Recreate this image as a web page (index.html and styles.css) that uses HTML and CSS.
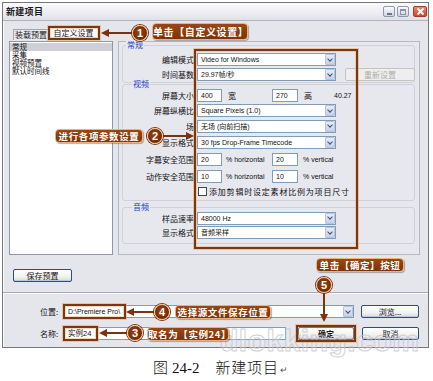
FILE: index.html
```html
<!DOCTYPE html>
<html lang="zh-CN">
<head>
<meta charset="utf-8">
<title>新建项目</title>
<link rel="stylesheet" href="styles.css">
</head>
<body>
<div class="page">
  <div class="dialog">
    <div class="titlebar">
      <span class="title">新建项目</span>
      <div class="winbtns">
        <span class="wb"><i class="ico-min"></i></span>
        <span class="wb"><i class="ico-max"></i></span>
        <span class="wb close"><svg width="9" height="9" viewBox="0 0 9 9"><path d="M1.5 1.5L7.5 7.5M7.5 1.5L1.5 7.5" stroke="#fff" stroke-width="1.8"/></svg></span>
      </div>
    </div>
    <div class="tabs">
      <span class="tab">装载预置</span>
      <span class="tab active">自定义设置</span>
    </div>
    <div class="main">
      <ul class="list">
        <li class="cur">常规</li>
        <li>采集</li>
        <li>视频预置</li>
        <li>默认时间线</li>
      </ul>
      <div class="panel">
        <div class="group g1">
          <div class="glabel">常规</div>
          <div class="row r15 first"><span class="lbl">编辑模式</span><div class="combo"><span>Video for Windows</span><i class="dd"></i></div></div>
          <div class="row r15"><span class="lbl">时间基数</span><div class="combo"><span>29.97帧/秒</span><i class="dd"></i></div><span class="btn off reset">重新设置</span></div>
        </div>
        <div class="group g2">
          <div class="glabel">视频</div>
          <div class="row r15"><span class="lbl">屏幕大小</span><span class="inp">400</span><span class="unit cj">宽</span><span class="inp w26">270</span><span class="unit2 cj">高</span><span class="txt">40.27</span></div>
          <div class="row r15"><span class="lbl">屏幕纵横比</span><div class="combo"><span>Square Pixels (1.0)</span><i class="dd"></i></div></div>
          <div class="row r16"><span class="lbl">场</span><div class="combo"><span>无场 (向前扫描)</span><i class="dd"></i></div></div>
          <div class="row r17"><span class="lbl">显示格式</span><div class="combo"><span>30 fps Drop-Frame Timecode</span><i class="dd"></i></div></div>
          <div class="row r17"><span class="lbl">字幕安全范围</span><span class="inp">20</span><span class="unit">% horizontal</span><span class="inp w26">20</span><span class="unit3">% vertical</span></div>
          <div class="row r16"><span class="lbl">动作安全范围</span><span class="inp">10</span><span class="unit">% horizontal</span><span class="inp w26">10</span><span class="unit3">% vertical</span></div>
          <div class="row r14"><span class="lbl"></span><span class="cb"></span><span class="cbtext">添加剪辑时设定素材比例为项目尺寸</span></div>
        </div>
        <div class="group g3">
          <div class="glabel">音频</div>
          <div class="row r14"><span class="lbl">样品速率</span><div class="combo"><span>48000 Hz</span><i class="dd"></i></div></div>
          <div class="row r15"><span class="lbl">显示格式</span><div class="combo"><span>音频采样</span><i class="dd"></i></div></div>
        </div>
      </div>
    </div>
    <div class="saverow"><span class="btn save">保存预置</span></div>
    <div class="sep"></div>
    <div class="fields">
      <div class="frow"><span class="flbl">位置:</span><div class="combo loc"><span>D:\Premiere Pro\</span><i class="dd"></i></div><span class="btn browse">浏览...</span></div>
      <div class="frow"><span class="flbl">名称:</span><span class="inp name">实例24</span><span class="btn ok">确定</span><span class="btn cancel">取消</span></div>
    </div>
  </div>

  <div class="caption"><span class="cj15">图</span><span class="fig">24-2</span><span class="cj15 ctitle">新建项目</span><span class="ret">↵</span></div>

  <div class="wm">dlokking.com</div>

  <!-- annotations -->
  <div class="hl hl-tab"></div>
  <svg class="ann a1" width="32" height="10" viewBox="0 0 32 10"><path d="M32 5H6" stroke="#7a3311" stroke-width="2"/><path d="M0 5L8 1V9Z" fill="#7a3311"/></svg>
  <span class="num n1">1</span>
  <span class="tag t1">单击【自定义设置】</span>

  <div class="hl hl-params"></div>
  <span class="tag t2">进行各项参数设置</span>
  <span class="num n2">2</span>
  <svg class="ann a2" width="31" height="10" viewBox="0 0 31 10"><path d="M0 5H24" stroke="#7a3311" stroke-width="2"/><path d="M31 5L23 1V9Z" fill="#7a3311"/></svg>

  <span class="tag t5">单击【确定】按钮</span>
  <span class="num n5">5</span>
  <svg class="ann a5" width="10" height="29" viewBox="0 0 10 29"><path d="M5 0V22" stroke="#7a3311" stroke-width="2"/><path d="M5 29L1 21H9Z" fill="#7a3311"/></svg>

  <div class="hl hl-loc"></div>
  <svg class="ann a4" width="28" height="10" viewBox="0 0 28 10"><path d="M28 5H6" stroke="#7a3311" stroke-width="2"/><path d="M0 5L8 1V9Z" fill="#7a3311"/></svg>
  <span class="num n4">4</span>
  <span class="tag t4">选择源文件保存位置</span>

  <div class="hl hl-name"></div>
  <svg class="ann a3" width="28" height="10" viewBox="0 0 28 10"><path d="M28 5H6" stroke="#7a3311" stroke-width="2"/><path d="M0 5L8 1V9Z" fill="#7a3311"/></svg>
  <span class="num n3">3</span>
  <span class="tag t3">取名为【实例24】</span>

  <div class="hl hl-ok"></div>
</div>
</body>
</html>
```

FILE: styles.css
```css
* { box-sizing: border-box; }
html, body { margin: 0; padding: 0; background: #fff; }
body {
  font-family: "Liberation Sans", "Noto Sans CJK SC", sans-serif;
  color: #111;
}
.page {
  position: relative;
  width: 433px;
  height: 381px;
  overflow: hidden;
  background: #fff;
}

/* ---------- dialog ---------- */
.dialog {
  margin: 2px 0 0 2px;
  width: 427px;
  height: 346px;
  border: 1px solid #77777f;
  background: #e5e5ec;
  display: flex;
  flex-direction: column;
  box-shadow: inset 1px 1px 0 #fafafc;
}
.titlebar {
  height: 18px;
  flex: none;
  display: flex;
  align-items: center;
  padding: 0 1px 0 3px;
  background: linear-gradient(#fbfbfc, #ececf1 60%, #e0e0e7);
  border-bottom: 1px solid #b2b2be;
}
.title {
  font-family: "Noto Sans CJK SC", sans-serif;
  font-weight: 700;
  font-size: 9px;
  line-height: 10px;
  color: #1a1a22;
  letter-spacing: 0.3px;
}
.winbtns { margin-left: auto; display: flex; gap: 1px; align-items: center; }
.wb {
  width: 12px;
  height: 11px;
  border: 1px solid #8d97ad;
  border-radius: 2px;
  background: linear-gradient(#fbfbfd, #cfd4e2);
  display: flex;
  align-items: center;
  justify-content: center;
  margin-left: 1px;
}
.wb.close {
  width: 14px;
  margin-left: 3px;
  border-color: #a53a28;
  background: linear-gradient(#ee8a6e, #d2442c);
}
.ico-min { width: 5px; height: 2px; background: #6a7690; margin-top: 5px; }
.ico-max { width: 6px; height: 6px; border: 1px solid #8790a6; border-top-width: 2px; }

.tabs {
  height: 19px;
  flex: none;
  display: flex;
  align-items: flex-end;
  padding-left: 10px;
}
.tab {
  font-family: "Noto Sans CJK SC", sans-serif;
  font-size: 8px;
  line-height: 9px;
  height: 11px;
  width: 36px;
  text-align: center;
  border: 1px solid #a2a6b2;
  border-bottom: none;
  background: #e9e9ef;
  color: #222;
}
.tab.active {
  height: 14px;
  width: 51px;
  margin-left: -1px;
  line-height: 12px;
  background: #fbfbfc;
}

.main {
  height: 216px;
  flex: none;
  display: flex;
  gap: 5px;
  padding: 1px 0 1px 6px;
}
.list {
  list-style: none;
  margin: 0;
  padding: 1px 0 0;
  width: 104px;
  background: #fff;
  border: 1px solid #8f98aa;
  font-family: "Noto Sans CJK SC", sans-serif;
  font-size: 7.5px;
  line-height: 8px;
}
.list li { padding-left: 2px; height: 8px; }
.list li.cur { background: #cfcfd6; }

.panel {
  width: 302px;
  border: 1px solid #b5b8c6;
  padding: 0 4px 0 3px;
  background: #e7e7ee;
}
.group {
  border: 1px solid #d0d0da;
  border-radius: 3px;
}
.g1 { margin-top: 3px; }
.g2 { margin-top: 1px; padding-bottom: 2px; }
.g3 { margin-top: 6px; padding-bottom: 3px; }
.glabel {
  font-family: "Noto Sans CJK SC", sans-serif;
  font-size: 8px;
  line-height: 8px;
  height: 8px;
  width: fit-content;
  margin: -5px 0 0 3px;
  padding: 0 1px;
  color: #2241c4;
  background: #e7e7ee;
}
.g2 .glabel, .g3 .glabel { margin-left: 9px; }
.row { display: flex; align-items: center; }
.row.first { margin-top: 3px; }
.r14 { height: 14px; }
.r15 { height: 15px; }
.r16 { height: 16px; }
.r17 { height: 17px; }
.lbl {
  width: 74px;
  flex: none;
  text-align: right;
  padding-right: 3px;
  font-family: "Noto Sans CJK SC", sans-serif;
  font-size: 8px;
  line-height: 9px;
  color: #111;
}
.combo {
  width: 139px;
  height: 13px;
  flex: none;
  border: 1px solid #7f9db9;
  background: #fff;
  display: flex;
  align-items: center;
  font-size: 7px;
  line-height: 9px;
  padding-left: 3px;
  color: #111;
  white-space: nowrap;
}
.dd {
  margin-left: auto;
  width: 10px;
  height: 11px;
  flex: none;
  border-radius: 1px;
  background: linear-gradient(#e6ebf7, #c6d1ea);
  border: 1px solid #b8c4de;
  display: flex;
  align-items: center;
  justify-content: center;
}
.dd::after {
  content: "";
  width: 3px;
  height: 3px;
  border-right: 1.5px solid #3f5073;
  border-bottom: 1.5px solid #3f5073;
  transform: translateY(-1px) rotate(45deg);
}
.inp {
  width: 25px;
  height: 13px;
  flex: none;
  border: 1px solid #7f9db9;
  background: #fff;
  font-size: 7px;
  line-height: 11px;
  padding-left: 3px;
  white-space: nowrap;
}
.inp.w26 { width: 26px; }
.unit {
  width: 50px;
  flex: none;
  padding-left: 4px;
  font-size: 7px;
  line-height: 9px;
}
.unit.cj { padding-left: 6px; font-size: 8px; }
.cj { font-family: "Noto Sans CJK SC", sans-serif; }
.unit2 { width: 36px; flex: none; padding-left: 6px; font-size: 8px; line-height: 9px; }
.unit3 { padding-left: 5px; font-size: 7px; line-height: 9px; }
.txt { font-size: 7px; line-height: 9px; }
.cb {
  width: 9px;
  height: 9px;
  flex: none;
  margin-left: 1px;
  margin-right: 2px;
  border: 1px solid #1c5180;
  background: #fff;
}
.cbtext {
  font-family: "Noto Sans CJK SC", sans-serif;
  font-size: 8px;
  line-height: 9px;
  letter-spacing: 0.8px;
  white-space: nowrap;
}

.btn {
  height: 13px;
  flex: none;
  border: 1px solid #2f4d78;
  border-radius: 2px;
  background: linear-gradient(#ffffff, #f2f2ef 60%, #dcdad2);
  box-shadow: inset 0 -1px 0 #b9c6e4;
  font-family: "Noto Sans CJK SC", sans-serif;
  font-size: 8px;
  line-height: 11px;
  text-align: center;
  color: #151515;
}
.btn.off {
  border-color: #c6c5bd;
  color: #b0afa6;
  box-shadow: none;
  background: #eeeef0;
}
.reset { width: 70px; margin-left: 9px; }

.saverow {
  height: 36px;
  flex: none;
  padding: 13px 0 0 10px;
}
.save { display: block; width: 59px; }
.sep {
  height: 2px;
  flex: none;
  border-top: 1px solid #a9a9b5;
  border-bottom: 1px solid #fbfbfd;
}
.fields {
  flex: 1;
  padding: 11px 0 0 37px;
  display: flex;
  flex-direction: column;
  gap: 9px;
}
.frow { display: flex; align-items: center; height: 13px; }
.flbl {
  width: 24px;
  flex: none;
  font-family: "Noto Sans CJK SC", sans-serif;
  font-size: 8px;
  line-height: 9px;
}
.combo.loc { width: 290px; }
.browse { width: 58px; margin-left: 7px; }
.inp.name {
  width: 222px;
  font-family: "Liberation Sans", "Noto Sans CJK SC", sans-serif;
  font-size: 7.5px;
}
.ok { width: 56px; margin-left: 12px; font-weight: 700; }
.cancel { width: 57px; margin-left: 8px; }

/* ---------- caption ---------- */
.caption {
  position: relative;
  z-index: 2;
  display: flex;
  align-items: baseline;
  margin-top: 10px;
  padding-left: 153px;
  height: 17px;
  line-height: 17px;
  font-size: 15px;
  color: #111;
}
.cj15 { font-family: "Noto Sans CJK SC", sans-serif; font-weight: 300; }
.fig { font-family: "Liberation Serif", serif; margin-left: 4px; }
.ctitle { margin-left: 16px; letter-spacing: 0.8px; }
.ret { font-size: 9px; color: #555; margin-left: 1px; }

.wm {
  position: absolute;
  left: 220px;
  top: 326px;
  z-index: 1;
  font-family: "Liberation Sans", sans-serif;
  font-weight: 700;
  font-size: 30px;
  line-height: 30px;
  letter-spacing: 0.5px;
  color: rgba(255, 255, 255, 0.25);
  -webkit-text-stroke: 1px #c4c4c8;
  opacity: 0.75;
}

/* ---------- annotations ---------- */
.ann { position: absolute; z-index: 3; }
.hl {
  position: absolute;
  z-index: 3;
  border: 2px solid #7a3714;
  box-shadow: 0 0 0 1px rgba(232, 168, 104, 0.55), inset 0 0 0 1px rgba(232, 168, 104, 0.45);
}
.hl-tab { left: 48px; top: 26px; width: 52px; height: 14px; }
.hl-params { left: 194px; top: 49px; width: 164px; height: 200px; }
.hl-loc { left: 63px; top: 304px; width: 63px; height: 15px; }
.hl-name { left: 63px; top: 326px; width: 35px; height: 15px; }
.hl-ok { left: 296px; top: 325px; width: 60px; height: 17px; }

.num {
  position: absolute;
  z-index: 4;
  width: 16px;
  height: 16px;
  border-radius: 50%;
  background: radial-gradient(circle at 45% 40%, #95410f, #662407);
  border: 1px solid #f1c38c;
  box-shadow: 0 0 0 1px #7a3311;
  color: #fff;
  font-family: "Liberation Sans", sans-serif;
  font-weight: 700;
  font-size: 11px;
  line-height: 14px;
  text-align: center;
}
.n1 { left: 132px; top: 25px; }
.n2 { left: 147px; top: 128px; }
.n3 { left: 127px; top: 325px; }
.n4 { left: 154px; top: 304px; }
.n5 { left: 316px; top: 277px; }

.tag {
  position: absolute;
  z-index: 4;
  height: 14px;
  border-radius: 4px;
  background: linear-gradient(#9a4612, #7e3309);
  border: 1px solid #eab27a;
  box-shadow: 1px 1px 1px rgba(0, 0, 0, 0.3);
  color: #fff;
  font-family: "Noto Sans CJK SC", sans-serif;
  font-weight: 700;
  font-size: 9.5px;
  line-height: 12px;
  text-align: center;
  white-space: nowrap;
  letter-spacing: 0.6px;
}
.t1 { left: 152px; top: 23px; width: 96px; height: 17px; line-height: 15px; font-size: 10px; }
.t2 { left: 55px; top: 129px; width: 88px; }
.t3 { left: 147px; top: 327px; width: 82px; }
.a1 { left: 101px; top: 28px; }
.a2 { left: 163px; top: 131px; }
.t4 { left: 175px; top: 305px; width: 96px; }
.t5 { left: 316px; top: 258px; width: 88px; }
.a3 { left: 99px; top: 328px; }
.a4 { left: 126px; top: 307px; }
.a5 { left: 319px; top: 293px; }
```
